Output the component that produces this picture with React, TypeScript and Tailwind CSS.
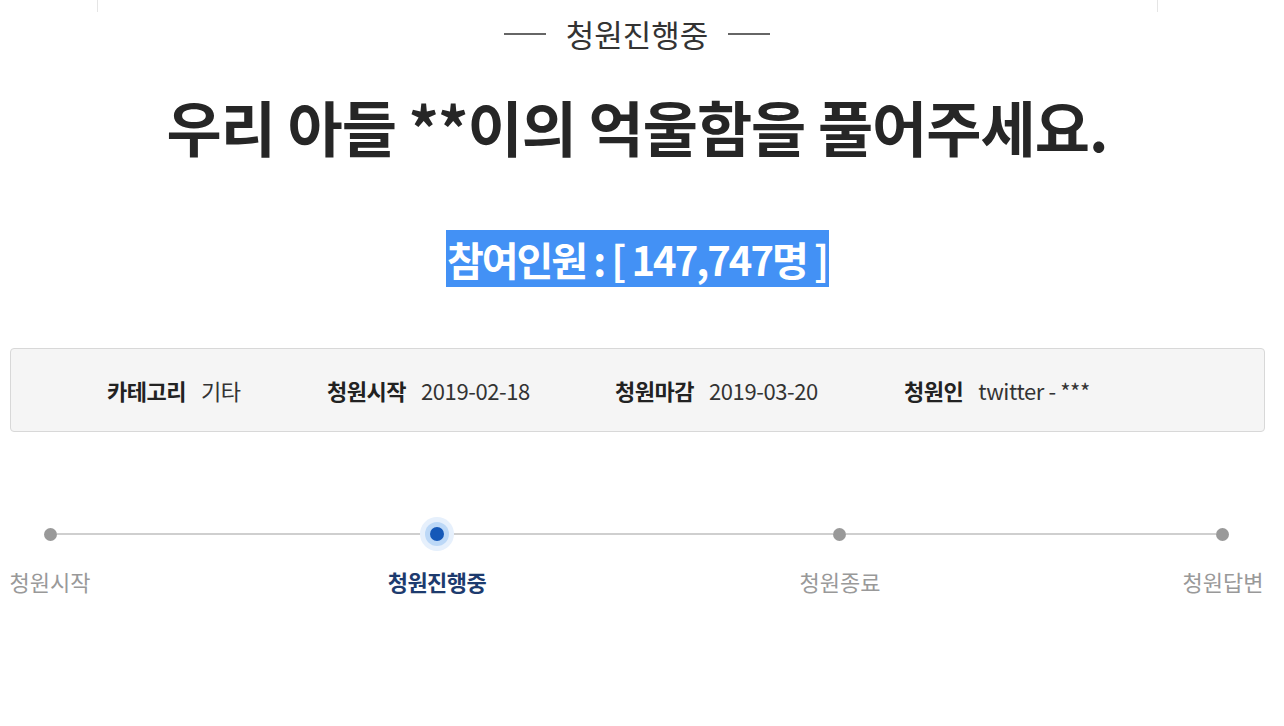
const font = { fontFamily: '"Noto Sans CJK KR", "Noto Sans", sans-serif' };

function InfoItem({ label, value, width }: { label: string; value: string; width: string }) {
  return (
    <div className={`flex shrink-0 items-center gap-[15px] ${width}`}>
      <span className="text-[22px] font-bold text-[#222] tracking-[-0.5px]">{label}</span>
      <span className="text-[22px] text-[#333] tracking-[-0.4px]">{value}</span>
    </div>
  );
}

function Dot() {
  return <div className="h-[13px] w-[13px] shrink-0 rounded-full bg-[#999]" />;
}

function StepLabel({ text, active, offset }: { text: string; active?: boolean; offset: string }) {
  return (
    <div className={`flex w-[100px] shrink-0 justify-center ${offset}`}>
      <span className={active ? "whitespace-nowrap font-bold text-[#1d3b6e] tracking-[-0.5px]" : "whitespace-nowrap"}>
        {text}
      </span>
    </div>
  );
}

export default function App() {
  return (
    <div className="min-h-[726px] w-[1284px] bg-white" style={font}>
      <div className="w-[1274px]">
        <div className="ml-[97px] mr-[116px] h-3 border-x border-[#e5e5e5]" />

        <div className="mt-[4px] flex items-center justify-center gap-[20px]">
          <span className="h-[2px] w-[42px] bg-[#666]" />
          <span className="text-[31px] leading-[36px] text-[#333]">청원진행중</span>
          <span className="h-[2px] w-[42px] bg-[#666]" />
        </div>

        <h1 className="mt-[39px] text-center text-[60px] font-bold leading-[70px] text-[#262626] tracking-[-1px]">
          우리 아들 **이의 억울함을 풀어주세요.
        </h1>

        <div className="mt-[69px] flex justify-center">
          <div className="flex h-[57px] w-[383px] items-center justify-center bg-[#4391f5] text-[40px] font-bold text-white tracking-[-2px]">
            참여인원 : [ 147,747명 ]
          </div>
        </div>

        <div className="ml-[10px] mr-[9px] mt-[61px] flex h-[84px] items-center rounded border border-[#d8d8d8] bg-[#f5f5f5] pl-[96px]">
          <InfoItem label="카테고리" value="기타" width="w-[220px]" />
          <InfoItem label="청원시작" value="2019-02-18" width="w-[288px]" />
          <InfoItem label="청원마감" value="2019-03-20" width="w-[289px]" />
          <InfoItem label="청원인" value="twitter - ***" width="w-[200px]" />
        </div>

        <div className="mt-[87px] flex h-[30px] items-center pl-[44px]">
          <Dot />
          <div className="h-[2px] w-[363px] bg-[#cfcfcf]" />
          <div className="flex h-[34px] w-[34px] shrink-0 items-center justify-center rounded-full bg-[#e6f0fc]">
            <div className="flex h-[24px] w-[24px] items-center justify-center rounded-full bg-[#bcd8f7]">
              <div className="h-[14px] w-[14px] rounded-full bg-[#1458b8]" />
            </div>
          </div>
          <div className="h-[2px] w-[379px] bg-[#cfcfcf]" />
          <Dot />
          <div className="h-[2px] w-[370px] bg-[#cfcfcf]" />
          <Dot />
        </div>

        <div className="mt-[17px] flex text-[22px] leading-[30px] text-[#999]">
          <StepLabel text="청원시작" offset="" />
          <StepLabel text="청원진행중" active offset="ml-[287px]" />
          <StepLabel text="청원종료" offset="ml-[303px]" />
          <StepLabel text="청원답변" offset="ml-[283px]" />
        </div>
      </div>
    </div>
  );
}
